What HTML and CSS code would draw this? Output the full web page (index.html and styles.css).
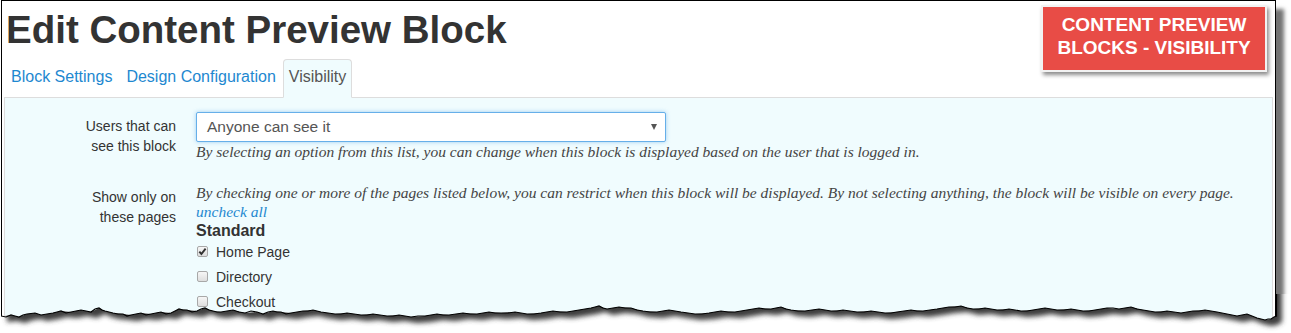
FILE: index.html
```html
<!DOCTYPE html>
<html lang="en">
<head>
    <meta charset="UTF-8">
    <meta name="viewport" content="width=device-width, initial-scale=1.0">
    <title>Edit Content Preview Block</title>
    <link rel="stylesheet" href="styles.css">
</head>
<body>
<div class="shot">
    <h1 class="title">Edit Content Preview Block</h1>

    <ul class="tabs">
        <li><a href="#">Block Settings</a></li>
        <li><a href="#">Design Configuration</a></li>
        <li class="active"><a href="#">Visibility</a></li>
    </ul>

    <div class="panel">
        <div class="row first">
            <div class="label">Users that can<br>see this block</div>
            <div class="field">
                <div class="select">Anyone can see it<span class="caret"></span></div>
                <p class="help">By selecting an option from this list, you can change when this block is displayed based on the user that is logged in.</p>
            </div>
        </div>

        <div class="row">
            <div class="label">Show only on<br>these pages</div>
            <div class="field">
                <p class="help">By checking one or more of the pages listed below, you can restrict when this block will be displayed. By not selecting anything, the block will be visible on every page.</p>
                <a class="uncheck" href="#">uncheck all</a>
                <h4 class="group">Standard</h4>
                <label class="check">
                    <span class="box"><svg width="11" height="11" viewBox="0 0 11 11"><path d="M2.3 5.6 L4.4 8 L8.6 2.6" fill="none" stroke="#333" stroke-width="1.9"/></svg></span>
                    Home Page
                </label>
                <label class="check"><span class="box"></span>Directory</label>
                <label class="check"><span class="box"></span>Checkout</label>
            </div>
        </div>
    </div>

    <!-- callout label on top of the screenshot -->
    <div class="badge">CONTENT PREVIEW<br>BLOCKS - VISIBILITY</div>

    <!-- torn paper edge at the bottom -->
    <svg class="torn" width="1292" height="44" viewBox="0 0 1292 44">
        <defs>
            <clipPath id="below">
                <path d="M0,22 L10,21 L18,23 L26,20 L34,19 L40,21 L52,19 L60,17 L70,18 L80,16 L90,18 L98,14 L104,17 L112,19 L122,20 L130,21 L140,19 L150,20 L160,18 L170,19 L178,15 L186,16 L196,17 L204,14 L212,17 L220,18 L232,16 L244,19 L256,18 L262,20 L272,17 L280,18 L290,19 L302,17 L312,16 L320,18 L334,20 L346,19 L360,21 L372,20 L386,22 L398,21 L410,23 L424,22 L436,20 L448,21 L462,19 L476,20 L488,18 L500,19 L514,18 L526,20 L540,19 L552,17 L566,18 L578,16 L590,14 L598,12 L606,15 L618,13 L630,14 L642,17 L656,18 L668,16 L680,18 L694,20 L708,19 L720,17 L734,18 L746,16 L758,14 L770,15 L780,13 L790,16 L804,17 L818,15 L830,17 L842,16 L856,18 L870,17 L884,19 L896,18 L910,16 L922,17 L936,15 L948,13 L960,12 L972,15 L984,14 L996,16 L1008,15 L1020,17 L1032,16 L1044,14 L1056,16 L1070,15 L1082,17 L1094,16 L1106,14 L1118,15 L1130,13 L1142,16 L1154,18 L1166,17 L1180,19 L1192,17 L1204,16 L1216,18 L1226,20 L1236,22 L1246,20 L1256,24 L1264,26 L1270,25 L1275,22 L1275,-5 L1292,-5 L1292,44 L0,44 Z"/>
            </clipPath>
            <filter id="soft" x="-5%" y="-50%" width="110%" height="200%">
                <feGaussianBlur stdDeviation="2.5"/>
            </filter>
        </defs>
        <rect width="1292" height="44" fill="#fff" clip-path="url(#below)"/>
        <g clip-path="url(#below)">
            <path transform="translate(6,6)" filter="url(#soft)" fill="#3c3c3c" d="M0,-40 L0,22 L10,21 L18,23 L26,20 L34,19 L40,21 L52,19 L60,17 L70,18 L80,16 L90,18 L98,14 L104,17 L112,19 L122,20 L130,21 L140,19 L150,20 L160,18 L170,19 L178,15 L186,16 L196,17 L204,14 L212,17 L220,18 L232,16 L244,19 L256,18 L262,20 L272,17 L280,18 L290,19 L302,17 L312,16 L320,18 L334,20 L346,19 L360,21 L372,20 L386,22 L398,21 L410,23 L424,22 L436,20 L448,21 L462,19 L476,20 L488,18 L500,19 L514,18 L526,20 L540,19 L552,17 L566,18 L578,16 L590,14 L598,12 L606,15 L618,13 L630,14 L642,17 L656,18 L668,16 L680,18 L694,20 L708,19 L720,17 L734,18 L746,16 L758,14 L770,15 L780,13 L790,16 L804,17 L818,15 L830,17 L842,16 L856,18 L870,17 L884,19 L896,18 L910,16 L922,17 L936,15 L948,13 L960,12 L972,15 L984,14 L996,16 L1008,15 L1020,17 L1032,16 L1044,14 L1056,16 L1070,15 L1082,17 L1094,16 L1106,14 L1118,15 L1130,13 L1142,16 L1154,18 L1166,17 L1180,19 L1192,17 L1204,16 L1216,18 L1226,20 L1236,22 L1246,20 L1256,24 L1264,26 L1270,25 L1275,22 L1275,-40 Z"/>
        </g>
        <polyline fill="none" stroke="#000" stroke-width="1.2" points="0,22 5,23 10,21 14,22 18,23 22,21 26,20 34,19 37,20 40,21 46,20 52,19 56,18 60,17 65,19 70,18 75,17 80,16 85,17 90,18 94,15 98,14 101,16 104,17 108,18 112,19 117,20 122,20 126,22 130,21 135,20 140,19 145,21 150,20 155,19 160,18 165,20 170,19 174,17 178,15 182,16 186,16 191,18 196,17 200,15 204,14 208,16 212,17 216,18 220,18 226,17 232,16 238,18 244,19 250,17 256,18 259,19 262,20 267,18 272,17 276,18 280,18 285,20 290,19 296,18 302,17 307,17 312,16 316,17 320,18 327,19 334,20 340,20 346,19 353,20 360,21 366,21 372,20 379,21 386,22 392,22 398,21 404,22 410,23 417,22 424,22 430,21 436,20 442,21 448,21 455,20 462,19 469,20 476,20 482,19 488,18 494,19 500,19 507,19 514,18 520,19 526,20 533,20 540,19 546,18 552,17 559,18 566,18 572,17 578,16 584,15 590,14 594,13 598,12 602,14 606,15 612,14 618,13 624,14 630,14 636,16 642,17 649,18 656,18 662,17 668,16 674,17 680,18 687,19 694,20 701,20 708,19 714,18 720,17 727,18 734,18 740,17 746,16 752,15 758,14 764,15 770,15 775,14 780,13 785,15 790,16 797,17 804,17 811,16 818,15 824,16 830,17 836,17 842,16 849,17 856,18 863,18 870,17 877,18 884,19 890,19 896,18 903,17 910,16 916,17 922,17 929,16 936,15 942,14 948,13 954,13 960,12 966,14 972,15 978,15 984,14 990,15 996,16 1002,16 1008,15 1014,16 1020,17 1026,17 1032,16 1038,15 1044,14 1050,15 1056,16 1063,16 1070,15 1076,16 1082,17 1088,17 1094,16 1100,15 1106,14 1112,14 1118,15 1124,14 1130,13 1136,15 1142,16 1148,17 1154,18 1160,18 1166,17 1173,18 1180,19 1186,18 1192,17 1198,17 1204,16 1210,17 1216,18 1221,19 1226,20 1231,21 1236,22 1241,21 1246,20 1251,22 1256,24 1260,25 1264,26 1267,25 1270,25 1273,23 1275.5,22 1275.5,-5"/>
    </svg>
</div>
</body>
</html>
```

FILE: styles.css
```css
/* page is a cropped screenshot: framed, torn at the bottom */
body {
    margin: 0;
    background-color: #fff;
    font-family: "Liberation Sans", Arial, sans-serif;
    font-size: 14px;
    color: #333;
    overflow: hidden;
}

.shot {
    position: relative;
    box-sizing: border-box;
    width: 1275px;
    height: 360px;
    margin-left: 1px;
    border: 1px solid #000;
    border-bottom: none;
    box-shadow: 8px 9px 4px rgba(0, 0, 0, 0.55);
    background-color: #fff;
}

.title {
    margin: 4px 0 0 0;
    padding-left: 4px;
    font-size: 38.5px;
    line-height: 50px;
    font-weight: bold;
    color: #333;
}

/* tabs */
.tabs {
    display: flex;
    list-style: none;
    margin: 4px 2px 0 2px;
    padding: 0;
    border-bottom: 1px solid #ddd;
}

.tabs li {
    margin-bottom: -1px;
}

.tabs a {
    display: block;
    padding: 7px 6px 10px;
    line-height: 20px;
    font-size: 16px;
    color: #1e88d0;
    text-decoration: none;
    border: 1px solid transparent;
    border-radius: 4px 4px 0 0;
}

.tabs .active a {
    padding: 7px 5px 10px;
    color: #555;
    background-color: #f0fcfe;
    border-color: #ddd #ddd transparent;
}

/* tab body */
.panel {
    margin: 0 2px;
    height: 300px;
    padding-top: 14px;
    background-color: #f0fcfe;
    border-left: 1px solid #ddd;
    border-right: 1px solid #ddd;
}

.row {
    display: grid;
    grid-template-columns: 171px 1fr;
    column-gap: 20px;
}

.row.first {
    margin-bottom: 22px;
}

.label {
    padding-top: 4px;
    text-align: right;
    line-height: 20px;
    color: #333;
}

.select {
    box-sizing: border-box;
    display: flex;
    align-items: center;
    justify-content: space-between;
    width: 470px;
    height: 30px;
    padding: 0 8px 0 10px;
    background-color: #fff;
    border: 1px solid #66afe9;
    border-radius: 2px;
    box-shadow: 0 0 4px rgba(102, 175, 233, 0.6);
    color: #555;
    font-size: 15.5px;
}

.caret {
    width: 0;
    height: 0;
    border-left: 3.5px solid transparent;
    border-right: 3.5px solid transparent;
    border-top: 6px solid #555;
}

.help {
    margin: 0;
    font-family: "Liberation Serif", "Times New Roman", serif;
    font-style: italic;
    font-size: 15.5px;
    line-height: 19px;
    color: #444;
}

.uncheck {
    display: block;
    font-family: "Liberation Serif", "Times New Roman", serif;
    font-style: italic;
    font-size: 15.5px;
    line-height: 19px;
    color: #1e88d0;
    text-decoration: none;
}

.group {
    margin: 0;
    font-size: 16px;
    line-height: 19px;
    font-weight: bold;
    color: #333;
}

.check {
    display: flex;
    align-items: center;
    gap: 8px;
    height: 25px;
    margin-top: -1px;
    margin-bottom: 1px;
    padding-left: 1px;
    color: #333;
}

.box {
    box-sizing: border-box;
    display: block;
    width: 11px;
    height: 11px;
    border: 1px solid #a8a8a8;
    border-radius: 2px;
    background: linear-gradient(#f6f6f6, #dedede);
}

.box svg {
    display: block;
    margin: -1px;
}

/* red callout */
.badge {
    position: absolute;
    top: 4px;
    left: 1039px;
    box-sizing: border-box;
    width: 226px;
    height: 67px;
    padding-top: 6px;
    border: 2px solid #f2f2f2;
    background-color: #e84c46;
    box-shadow: 2px 3px 4px rgba(0, 0, 0, 0.45);
    color: #fff;
    font-size: 19px;
    line-height: 23px;
    font-weight: bold;
    text-align: center;
}

.torn {
    position: absolute;
    left: -1px;
    top: 293px;
    display: block;
}
```
